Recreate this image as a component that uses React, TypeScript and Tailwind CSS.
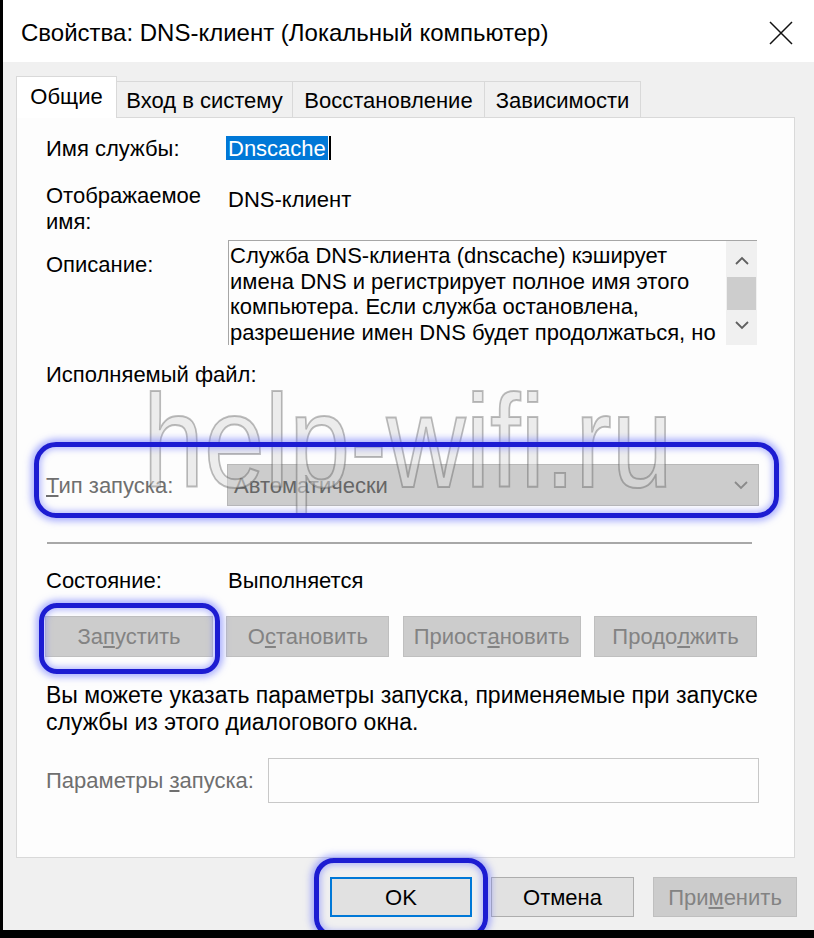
import React from "react"

const font = { fontFamily: '"Liberation Sans", Arial, sans-serif' }

const descLines = [
  "Служба DNS-клиента (dnscache) кэширует",
  "имена DNS и регистрирует полное имя этого",
  "компьютера. Если служба остановлена,",
  "разрешение имен DNS будет продолжаться, но",
]

function Chevron({ up = false, className = "" }: { up?: boolean; className?: string }) {
  return (
    <svg width="14" height="9" viewBox="0 0 14 9" className={className}>
      <path
        d={up ? "M1 8 L7 2 L13 8" : "M1 1 L7 7 L13 1"}
        fill="none"
        stroke="currentColor"
        strokeWidth="1.8"
      />
    </svg>
  )
}

function Tab({ label, active = false, width }: { label: string; active?: boolean; width: string }) {
  return (
    <div
      className={
        active
          ? `relative z-10 -mb-px flex h-[42px] items-center justify-center border border-b-0 border-[#d9d9d9] bg-white pb-[3px] text-[22px] ${width}`
          : `flex h-[36px] items-center justify-center border border-b-0 border-l-0 border-[#d9d9d9] bg-[#f0f0f0] pt-[2px] text-[22px] ${width}`
      }
    >
      {label}
    </div>
  )
}

function DisabledButton({ children, width }: { children: React.ReactNode; width: string }) {
  return (
    <div
      className={`flex h-[41px] items-center justify-center border border-[#bfbfbf] bg-[#cccccc] text-[22px] text-[#838383] ${width}`}
    >
      {children}
    </div>
  )
}

function Highlight({ className }: { className: string }) {
  return (
    <div
      className={`pointer-events-none absolute border-[5px] border-[#1c1cd2] shadow-[0_0_7px_3px_rgba(110,120,255,0.6),inset_0_0_6px_2px_rgba(110,120,255,0.5)] ${className}`}
    />
  )
}

export default function App() {
  return (
    <div className="h-[938px] w-[814px] overflow-hidden bg-black pl-[3px]" style={font}>
      <div className="relative flex h-[930px] w-[811px] flex-col overflow-hidden bg-[#f0f0f0] text-black">
        {/* title bar */}
        <div className="flex h-[62px] items-center justify-between bg-white pl-[18px] pr-[20px] pt-[3px]">
          <span className="text-[24px]">Свойства: DNS-клиент (Локальный компьютер)</span>
          <svg width="26" height="26" viewBox="0 0 26 26">
            <path d="M2 2 L24 24 M24 2 L2 24" stroke="#111" strokeWidth="1.5" />
          </svg>
        </div>

        {/* tabs */}
        <div className="ml-[13px] mt-[14px] flex items-end">
          <Tab label="Общие" active width="w-[101px]" />
          <Tab label="Вход в систему" width="w-[176px]" />
          <Tab label="Восстановление" width="w-[192px]" />
          <Tab label="Зависимости" width="w-[156px]" />
        </div>

        {/* panel */}
        <div className="ml-[13px] flex h-[741px] w-[779px] flex-col border border-[#d9d9d9] bg-[#fdfdfd] pl-[29px] pt-[17px] text-[22px]">
          <div className="flex h-[26px] items-center">
            <span className="w-[182px]">Имя службы:</span>
            <span className="relative -ml-[2px] flex h-[24px] items-center bg-[#0078d7] px-[2px] text-white">
              Dnscache
              <span className="absolute -right-[3px] top-0 h-[24px] w-[2px] bg-black" />
            </span>
          </div>

          <div className="mt-[22px] flex h-[52px]">
            <span className="w-[182px] leading-[26px]">
              Отображаемое
              <br />
              имя:
            </span>
            <span className="pt-[4px] leading-[26px]">DNS-клиент</span>
          </div>

          <div className="mt-[5px] flex h-[105px]">
            <span className="w-[182px] pt-[12px] leading-[26px]">Описание:</span>
            <div className="flex w-[529px] border-l border-t border-[#a6a6a6] bg-[#fdfdfd]">
              <div className="flex-1 pl-[1px] pt-[2px] leading-[25.7px]">
                {descLines.map((l) => (
                  <div key={l} className="whitespace-nowrap">
                    {l}
                  </div>
                ))}
              </div>
              <div className="flex w-[31px] flex-col items-center bg-[#f0f0f0] text-[#606060]">
                <div className="flex h-[36px] items-center justify-center pt-[2px]">
                  <Chevron up />
                </div>
                <div className="h-[33px] w-[29px] bg-[#cdcdcd]" />
                <div className="flex flex-1 items-center justify-center pb-[4px]">
                  <Chevron />
                </div>
              </div>
            </div>
          </div>

          <div className="mt-[17px] h-[26px] leading-[26px]">Исполняемый файл:</div>

          <div className="mt-[76px] flex h-[42px] items-center">
            <span className="w-[181px] text-[#6f6f6f]">
              <u>Т</u>ип запуска:
            </span>
            <div className="flex h-[42px] w-[532px] items-center justify-between border border-[#b8b8b8] bg-[#cccccc] pl-[6px] pr-[10px] text-[#666]">
              <span>Автоматически</span>
              <Chevron className="text-[#8a8a8a]" />
            </div>
          </div>

          <div className="ml-px mt-[36px] h-[2px] w-[705px] bg-[#a8a8a8]" />

          <div className="mt-[23px] flex h-[26px] items-center">
            <span className="w-[182px]">Состояние:</span>
            <span>Выполняется</span>
          </div>

          <div className="-ml-[1px] mt-[23px] flex w-[712px] justify-between">
            <DisabledButton width="w-[168px]">
              За<u>п</u>устить
            </DisabledButton>
            <DisabledButton width="w-[163px]">
              О<u>с</u>тановить
            </DisabledButton>
            <DisabledButton width="w-[178px]">
              Приост<u>а</u>новить
            </DisabledButton>
            <DisabledButton width="w-[163px]">
              Продо<u>л</u>жить
            </DisabledButton>
          </div>

          <div className="mt-[25px] whitespace-nowrap text-[23px] leading-[27px]">
            Вы можете указать параметры запуска, применяемые при запуске
            <br />
            службы из этого диалогового окна.
          </div>

          <div className="mt-[22px] flex h-[45px] items-center">
            <span className="w-[222px] text-[#6f6f6f]">
              Параметры <u>з</u>апуска:
            </span>
            <div className="h-[45px] w-[491px] border border-[#c8c8c8] bg-[#fdfdfd]" />
          </div>
        </div>

        {/* footer buttons */}
        <div className="flex justify-end gap-[19px] pr-[17px] pt-[19px] text-[22px]">
          <div className="flex h-[40px] w-[142px] items-center justify-center border-2 border-[#0078d7] bg-[#e1e1e1]">
            OK
          </div>
          <div className="flex h-[40px] w-[143px] items-center justify-center border border-[#adadad] bg-[#e1e1e1]">
            Отмена
          </div>
          <div className="flex h-[40px] w-[144px] items-center justify-center border border-[#bfbfbf] bg-[#cccccc] text-[#838383]">
            При<u>м</u>енить
          </div>
        </div>

        {/* watermark */}
        <div className="pointer-events-none absolute left-[140px] top-[376px] origin-left scale-x-[0.83] whitespace-nowrap text-[132px] leading-none text-[rgba(220,220,220,0.5)] [-webkit-text-stroke:2px_rgba(70,70,70,0.35)]">
          help-wifi.ru
        </div>

        {/* blue marker frames */}
        <Highlight className="left-[31px] top-[442px] h-[76px] w-[745px] rounded-[22px]" />
        <Highlight className="left-[36px] top-[603px] h-[71px] w-[181px] rounded-[18px]" />
        <Highlight className="left-[311px] top-[858px] h-[80px] w-[174px] rounded-[20px]" />
      </div>
    </div>
  )
}
